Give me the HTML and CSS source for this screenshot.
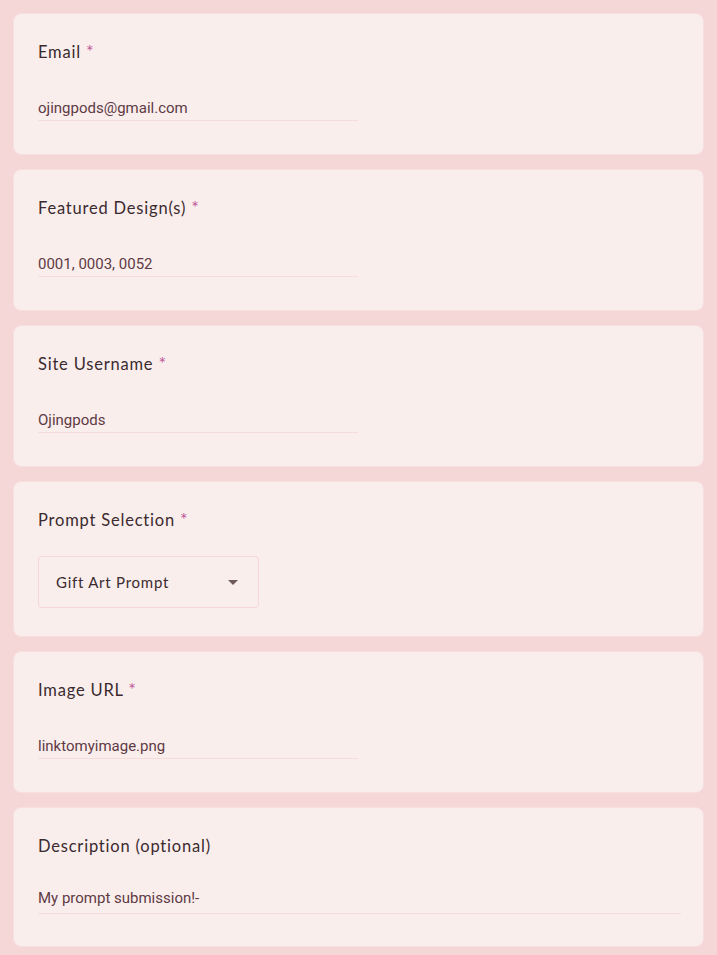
FILE: index.html
```html
<!DOCTYPE html>
<html>
<head>
<meta charset="utf-8">
<link rel="stylesheet" href="styles.css">
</head>
<body>
<div class="form">
  <div class="card">
    <div class="label">Email <span class="req">*</span></div>
    <div class="input short">ojingpods@gmail.com</div>
  </div>
  <div class="card">
    <div class="label">Featured Design(s) <span class="req">*</span></div>
    <div class="input short">0001, 0003, 0052</div>
  </div>
  <div class="card">
    <div class="label">Site Username <span class="req">*</span></div>
    <div class="input short">Ojingpods</div>
  </div>
  <div class="card card-select">
    <div class="label">Prompt Selection <span class="req">*</span></div>
    <div class="select">
      <span>Gift Art Prompt</span>
      <svg class="arrow" width="10" height="5" viewBox="0 0 10 5"><path d="M0 0 L10 0 L5 5 Z" fill="#6e5a5e"/></svg>
    </div>
  </div>
  <div class="card">
    <div class="label">Image URL <span class="req">*</span></div>
    <div class="input short">linktomyimage.png</div>
  </div>
  <div class="card card-desc">
    <div class="label">Description (optional)</div>
    <div class="input long">My prompt submission!-</div>
  </div>
</div>
</body>
</html>
```
FILE: styles.css
```css
html, body {
  margin: 0;
  padding: 0;
  background: #f6d7d8;
}
.form {
  display: flex;
  flex-direction: column;
  gap: 14px;
  padding: 13px;
}
.card {
  background: #f9eeec;
  border: 1px solid #f8dfdf;
  border-radius: 8px;
  height: 142px;
  box-sizing: border-box;
  padding: 27px 24px 0 24px;
}
.card-select { height: 156px; }
.card-desc { height: 140px; }
.label {
  font-family: "Lato", sans-serif;
  font-size: 16.5px;
  line-height: 22px;
  height: 22px;
  color: #3b2a2f;
  letter-spacing: 0.8px;
}
.req {
  color: #c0589b;
  font-size: 18px;
  line-height: 0;
  letter-spacing: 0;
}
.input {
  font-family: "Roboto", sans-serif;
  font-size: 15px;
  color: #5f3a45;
  margin-top: 35px;
  padding-bottom: 2px;
  line-height: 20px;
  border-bottom: 1px solid #f8dcdc;
}
.input.short { width: 320px; }
.input.long { margin-top: 31px; padding-bottom: 5px; width: 643px; }
.select {
  margin-top: 25px;
  width: 221px;
  height: 52px;
  box-sizing: border-box;
  border: 1px solid #f7d5d9;
  border-radius: 4px;
  display: flex;
  align-items: center;
  justify-content: space-between;
  padding: 0 20px 0 17px;
  font-family: "Lato", sans-serif;
  font-size: 15px;
  color: #3b2a2f;
  letter-spacing: 0.75px;
}
.arrow { display: block; }
```
